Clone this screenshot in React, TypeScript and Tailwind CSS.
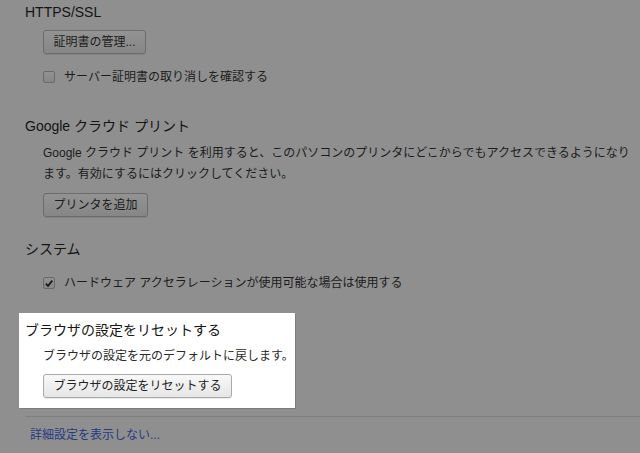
const jp = { fontFamily: '"Liberation Sans", "Noto Sans CJK JP", sans-serif' };

function DimButton({ label, w }: { label: string; w: string }) {
  return (
    <button
      type="button"
      className={`h-6 ${w} rounded-[3px] border border-[#6c6c6c] bg-gradient-to-b from-[#939393] to-[#868686] text-[12px] text-[#1c1c1c] shadow-[0_1px_0_rgba(0,0,0,0.08)]`}
    >
      {label}
    </button>
  );
}

function DimCheck({ checked, label }: { checked?: boolean; label: string }) {
  return (
    <div className="flex h-5 items-center">
      <span className="flex h-[12px] w-[12px] items-center justify-center rounded-[2px] border border-[#6a6a6a] bg-gradient-to-b from-[#929292] to-[#878787]">
        {checked && (
          <svg viewBox="0 0 12 12" className="h-[11px] w-[11px]" aria-hidden>
            <path d="M2.2 6.2 4.8 8.8 10 2.6" fill="none" stroke="#1a1a1a" strokeWidth="2.2" />
          </svg>
        )}
      </span>
      <span className="ml-[9px] text-[12px] text-[#1c1c1c]">{label}</span>
    </div>
  );
}

export default function App() {
  return (
    <main className="h-[453px] w-[640px] overflow-hidden bg-[#8f8f8f]" style={jp}>
      <div className="pl-[25px] pt-[2px]">
        <h3 className="h-5 text-[14px] leading-5 text-[#141414]">HTTPS/SSL</h3>
        <div className="ml-[18px] mt-[7px]">
          <DimButton label="証明書の管理..." w="w-[103px]" />
          <div className="mt-[13px]">
            <DimCheck label="サーバー証明書の取り消しを確認する" />
          </div>
        </div>

        <h3 className="mt-[29px] h-5 text-[14px] leading-5 text-[#141414]">Google クラウド プリント</h3>
        <div className="ml-[18px] mt-[7px]">
          <p className="text-[12px] leading-[21px] text-[#1c1c1c] whitespace-nowrap">
            Google クラウド プリント を利用すると、このパソコンのプリンタにどこからでもアクセスできるようになり
            <br />
            ます。有効にするにはクリックしてください。
          </p>
          <div className="mt-[7px]">
            <DimButton label="プリンタを追加" w="w-[105px]" />
          </div>
        </div>

        <h3 className="mt-[22px] h-5 text-[14px] leading-5 text-[#141414]">システム</h3>
        <div className="ml-[18px] mt-[14px]">
          <DimCheck checked label="ハードウェア アクセラレーションが使用可能な場合は使用する" />
        </div>
      </div>

      <section className="ml-[19px] mt-[20px] h-[95px] w-[276px] bg-white pl-[6px] pt-[7px] shadow-[1px_1px_0_rgba(0,0,0,0.12)]">
        <h3 className="h-5 text-[14px] leading-5 text-[#161616]">ブラウザの設定をリセットする</h3>
        <div className="ml-[18px]">
          <p className="mt-[6px] h-[20px] text-[12px] leading-5 text-[#2a2a2a]">
            ブラウザの設定を元のデフォルトに戻します。
          </p>
          <button
            type="button"
            className="mt-[8px] h-6 w-[189px] rounded-[3px] border border-[#a9a9a9] bg-gradient-to-b from-[#f8f8f8] to-[#e6e6e6] text-[12px] text-[#222] shadow-[0_1px_0_rgba(0,0,0,0.08)]"
          >
            ブラウザの設定をリセットする
          </button>
        </div>
      </section>

      <div className="ml-[25px] mt-[8px] border-t border-[#7e7e7e]" />
      <div className="pl-[30px] pt-[5px]">
        <a className="text-[12px] leading-5 text-[#263a82]">詳細設定を表示しない...</a>
      </div>
    </main>
  );
}
